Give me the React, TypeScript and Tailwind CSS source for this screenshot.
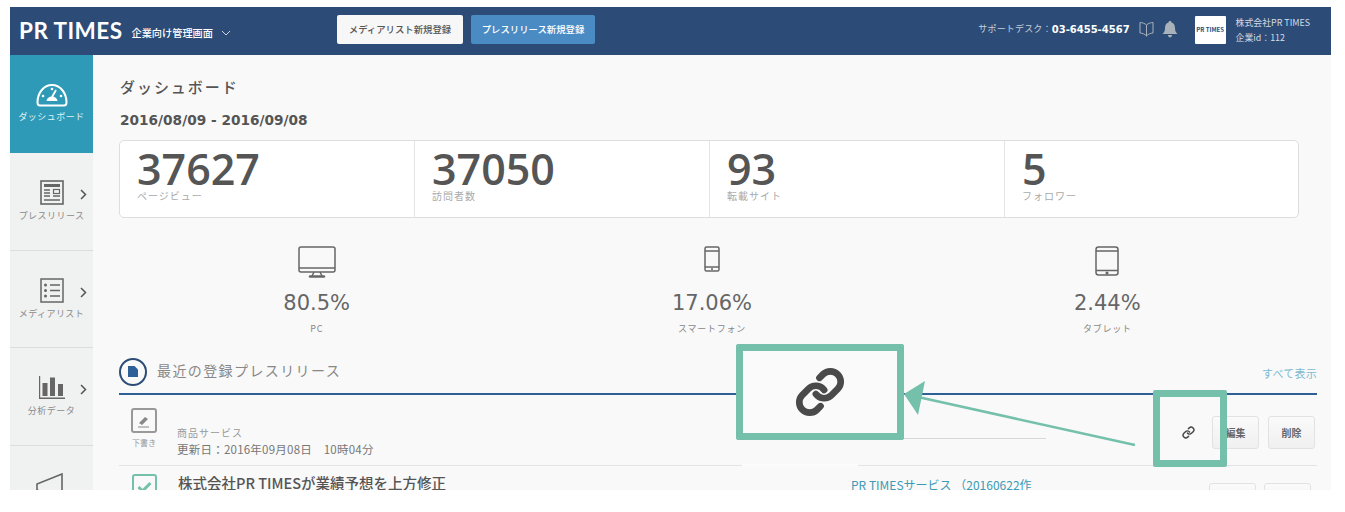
import { Link } from 'lucide-react';
import type { ReactNode } from 'react';

const stats = [
  { value: '37627', label: 'ページビュー' },
  { value: '37050', label: '訪問者数' },
  { value: '93', label: '転載サイト' },
  { value: '5', label: 'フォロワー' },
];

function GaugeIcon() {
  return (
    <svg width="32" height="24" viewBox="0 0 32 24" fill="none" stroke="#fff" strokeWidth="2">
      <path d="M4 22.500h24c1.500 0 2.500-1 2.500-3C30.500 9.500 24 2 16 2S1.500 9.500 1.500 19.500c0 2 1 3 2.500 3z" />
      <path d="M20 7l-4 7" strokeWidth="1.800" />
      <path d="M10.500 18c.5-3 2.500-4.500 5.500-4.500s5 1.500 5.500 4.500z" fill="#fff" stroke="none" />
      <circle cx="16" cy="6" r="1.300" fill="#fff" stroke="none" />
      <circle cx="7" cy="13" r="1.300" fill="#fff" stroke="none" />
      <circle cx="25" cy="13" r="1.300" fill="#fff" stroke="none" />
    </svg>
  );
}

function NewsIcon() {
  return (
    <svg width="24" height="25" viewBox="0 0 24 25" fill="none" stroke="#666">
      <rect x="1" y="1" width="22" height="23" strokeWidth="1.600" />
      <path d="M4 5.500h16" strokeWidth="3" />
      <path d="M4 10h6M4 13h6M4 16h6M13 16h7M4 20h16" strokeWidth="1.400" />
      <rect x="13.500" y="9.500" width="6" height="4" strokeWidth="1.200" />
    </svg>
  );
}

function ListIcon() {
  return (
    <svg width="24" height="25" viewBox="0 0 24 25" fill="none" stroke="#666">
      <rect x="1" y="1" width="22" height="23" strokeWidth="1.500" />
      <path d="M10 7h10M10 12.500h10M10 18h10" strokeWidth="1.500" />
      <circle cx="5.500" cy="7" r="1.500" fill="#666" stroke="none" />
      <circle cx="5.500" cy="12.500" r="1.500" fill="#666" stroke="none" />
      <circle cx="5.500" cy="18" r="1.500" fill="#666" stroke="none" />
    </svg>
  );
}

function BarsIcon() {
  return (
    <svg width="28" height="23" viewBox="0 0 28 23" fill="#666" stroke="none">
      <path d="M1 0h1.200v21.500H27V23H1z" />
      <rect x="4.500" y="7" width="5" height="13" />
      <rect x="12" y="1.500" width="5" height="18.500" />
      <rect x="20" y="8" width="5" height="12" />
    </svg>
  );
}

function MegaphoneIcon() {
  return (
    <svg className="-ml-[4px]" width="28" height="30" viewBox="0 0 28 30" fill="none" stroke="#666" strokeWidth="1.600">
      <path d="M26 1v26L1 17v-6z" />
    </svg>
  );
}

function MonitorIcon() {
  return (
    <svg width="38" height="32" viewBox="0 0 38 32" fill="none" stroke="#666" strokeWidth="1.500">
      <rect x="1" y="1" width="36" height="25" rx="2" />
      <path d="M1 22h36" />
      <path d="M16 26l-2 4M22 26l2 4" />
      <path d="M12 30.500h14" strokeWidth="2.400" strokeLinecap="round" />
    </svg>
  );
}

function PhoneIcon() {
  return (
    <svg width="16" height="26" viewBox="0 0 16 26" fill="none" stroke="#666" strokeWidth="1.500">
      <rect x="1" y="1" width="14" height="24" rx="1.500" />
      <path d="M1 5h14M1 21h14" />
      <path d="M7 23h2" />
    </svg>
  );
}

function TabletIcon() {
  return (
    <svg width="24" height="30" viewBox="0 0 24 30" fill="none" stroke="#666" strokeWidth="1.500">
      <rect x="1" y="1" width="22" height="28" rx="2.500" />
      <path d="M1 5h22M1 24.500h22" />
      <circle cx="12" cy="27" r=".8" fill="#666" />
    </svg>
  );
}

function SideItem({ icon, label, active, height, chevron = true }: { icon: ReactNode; label: string; active?: boolean; height: string; chevron?: boolean }) {
  return (
    <div className={`${height} shrink-0 flex flex-col items-center pt-[27px] border-b ${active ? 'bg-[#2f9ab7] border-[#2f9ab7]' : 'bg-[#f0f1f1] border-[#dcdcdc]'}`}>
      <div className="w-full grid grid-cols-[1fr_auto_1fr] items-center h-[25px]">
        <span />
        {icon}
        {chevron && (
          <span className="justify-self-end mr-[6px] mt-[4px] text-[#555]">
            <svg width="7" height="11" viewBox="0 0 7 11" fill="none" stroke="currentColor" strokeWidth="1.500">
              <path d="M1 1l4.500 4.500L1 10" />
            </svg>
          </span>
        )}
      </div>
      <span className={`${active ? 'mt-[3px] text-[#dff1f5]' : 'mt-[4px] text-[#8a8a8a]'} text-[9px] leading-[14px] tracking-[0.05em]`}>{label}</span>
    </div>
  );
}

function Device({ icon, value, label }: { icon: ReactNode; value: string; label: string }) {
  return (
    <div className="flex flex-col items-center">
      <div className="h-[32px] flex items-start">{icon}</div>
      <div className="mt-[12px] h-[26px] text-[21px] leading-[26px] text-[#666] font-['DejaVu_Sans','Noto_Sans_CJK_JP',sans-serif]">{value}</div>
      <div className="mt-[6px] h-[14px] text-[9px] leading-[14px] tracking-[0.08em] text-[#888]">{label}</div>
    </div>
  );
}

function ActionButton({ label }: { label: string }) {
  return (
    <div className="w-[47px] h-[33px] flex items-center justify-center rounded-[3px] border border-[#e2e2e2] bg-gradient-to-b from-[#fafafa] to-[#f0f0f0] text-[10px] font-bold text-[#666]">
      {label}
    </div>
  );
}

export default function App() {
  return (
    <div className="relative w-[1345px] h-[512px] bg-white overflow-hidden pt-[7px] pl-[10px] font-['Noto_Sans_CJK_JP','Noto_Sans',sans-serif]">
      <div className="w-[1321px] h-[483px] overflow-hidden bg-[#f9f9f9] flex flex-col">
        {/* Header */}
        <header className="h-[48px] shrink-0 bg-[#2c4c77] flex items-center text-white">
          <span className="ml-[9px] text-[22.500px] leading-none font-bold tracking-[0.02em] font-['Lato',sans-serif]">PR TIMES</span>
          <span className="ml-[9px] mt-[3px] text-[10.200px] font-medium">企業向け管理画面</span>
          <svg className="ml-[8px] mt-[4px]" width="10" height="6" viewBox="0 0 10 6" fill="none" stroke="#c8d2e0" strokeWidth="1">
            <path d="M1 1l4 4 4-4" />
          </svg>
          <div className="ml-[106px] mb-[3px] w-[126px] h-[29px] bg-[#f7f7f7] rounded-[2px] flex items-center justify-center text-[9.400px] font-medium text-[#555]">メディアリスト新規登録</div>
          <div className="ml-[8px] mb-[3px] w-[124px] h-[29px] bg-[#4a8bc4] rounded-[2px] flex items-center justify-center text-[9.400px] font-medium text-white">プレスリリース新規登録</div>
          <div className="ml-auto mb-[4px] flex items-center">
            <span className="text-[9px] tracking-[0.02em] text-[#c5cfdc]">サポートデスク：</span>
            <span className="text-[10px] font-bold font-['DejaVu_Sans',sans-serif]">03-6455-4567</span>
          </div>
          <svg className="ml-[9px] mb-[4px]" width="15" height="16" viewBox="0 0 15 16" fill="none" stroke="#a9b1bb" strokeWidth="1">
            <path d="M7.500 4C6 2.500 3 1.500 1 1.500V12c2 0 5 1 6.500 3 1.500-2 4.500-3 6.500-3V1.500C12 1.500 9 2.500 7.500 4zM7.500 4v11" />
          </svg>
          <svg className="ml-[8px] mb-[4px]" width="16" height="17" viewBox="0 0 16 17" fill="#a9b1bb">
            <path d="M8 0c1 0 1.500.6 1.500 1.500C12 2.200 13 4.500 13 7c0 3 .8 4.500 2.500 6H.5C2.200 11.500 3 10 3 7c0-2.500 1-4.800 3.500-5.500C6.500.6 7 0 8 0zM6 14h4c0 1.500-1 2.500-2 2.500S6 15.500 6 14z" />
          </svg>
          <div className="ml-[17px] w-[31px] h-[28px] mb-[3px] bg-white rounded-[1px] flex items-center justify-center text-[6px] font-bold text-[#2c4c77] whitespace-nowrap">PR TIMES</div>
          <div className="ml-[10px] mr-[21px] mb-[3px] text-[8.900px] leading-[15px] text-[#d5dce6]">
            <div>株式会社PR TIMES</div>
            <div>企業id：112</div>
          </div>
        </header>

        <div className="flex flex-1 min-h-0">
          {/* Sidebar */}
          <aside className="w-[83px] shrink-0 flex flex-col">
            <SideItem active chevron={false} height="h-[98px]" icon={<GaugeIcon />} label="ダッシュボード" />
            <SideItem height="h-[98px]" icon={<NewsIcon />} label="プレスリリース" />
            <SideItem height="h-[97px]" icon={<ListIcon />} label="メディアリスト" />
            <SideItem height="h-[98px]" icon={<BarsIcon />} label="分析データ" />
            <SideItem chevron={false} height="h-[98px]" icon={<MegaphoneIcon />} label="" />
          </aside>

          {/* Main */}
          <main className="flex-1 min-w-0 pl-[26px] pr-[14px] pt-[22px]">
            <h1 className="ml-px h-[20px] text-[15px] leading-[20px] font-medium tracking-[0.13em] text-[#555]">ダッシュボード</h1>
            <div className="ml-px mt-[13px] h-[20px] text-[13.700px] leading-[20px] font-bold text-[#555] font-['DejaVu_Sans',sans-serif]">2016/08/09 - 2016/09/08</div>

            <div className="mt-[10px] mr-[18px] h-[78px] bg-white border border-[#dedede] rounded-[5px] grid grid-cols-[295px_295px_295px_1fr]">
              {stats.map((s, i) => (
                <div key={s.label} className={`pl-[17px] ${i < 3 ? 'border-r border-[#e4e4e4]' : ''}`}>
                  <div className="h-[40px] mt-[8px] text-[43px] leading-[40px] font-semibold text-[#555] font-['Open_Sans',sans-serif]">{s.value}</div>
                  <div className="h-[14px] text-[10px] leading-[14px] tracking-[0.1em] text-[#aaa]">{s.label}</div>
                </div>
              ))}
            </div>

            <div className="mt-[28px] grid grid-cols-3 mr-[12px]">
              <Device icon={<MonitorIcon />} value="80.5%" label="PC" />
              <Device icon={<PhoneIcon />} value="17.06%" label="スマートフォン" />
              <Device icon={<TabletIcon />} value="2.44%" label="タブレット" />
            </div>

            <div className="mt-[21px] h-[29px] flex items-center">
              <div className="w-[28px] h-[28px] rounded-full border-2 border-[#2c4c77] flex items-center justify-center">
                <svg width="10" height="11" viewBox="0 0 10 11" fill="#2f5f97">
                  <path d="M0 0h6.500L10 3.500V11H0z" />
                </svg>
              </div>
              <h2 className="ml-[10px] mb-[3px] text-[14px] tracking-[0.1em] text-[#888]">最近の登録プレスリリース</h2>
              <span className="ml-auto mt-[3px] text-[11px] tracking-[0.02em] text-[#7db9cf]">すべて表示</span>
            </div>
            <div className="mt-[7px] h-[2px] bg-[#2f5f97]" />

            {/* Rows */}
            <div className="h-[71px] flex border-b border-[#e4e4e4]">
              <div className="w-[58px] pl-[12px] pt-[13px] flex flex-col">
                <div className="w-[26px] h-[25px] rounded-[3px] border-2 border-[#999] flex items-center justify-center">
                  <svg width="14" height="14" viewBox="0 0 14 14" fill="#888">
                    <path d="M2 9l6-6 3 2-6 6zM1 12.500h11v1H1z" />
                  </svg>
                </div>
                <span className="mt-[4px] ml-[1px] text-[8px] leading-[12px] text-[#999]">下書き</span>
              </div>
              <div className="pt-[29px] text-[10px] leading-[17px] text-[#888]">
                <div className="tracking-[0.1em] text-[#999]">商品サービス</div>
                <div className="text-[11.500px] tracking-[0.02em] text-[#777]">更新日：2016年09月08日　10時04分</div>
              </div>
              <div className="ml-auto mr-[2px] pt-[21px] flex items-start gap-[9px]">
                <div className="mr-[8px] mt-[10px]">
                  <Link size={13} strokeWidth={2.600} color="#444" />
                </div>
                <ActionButton label="編集" />
                <ActionButton label="削除" />
              </div>
            </div>
            <div className="flex">
              <div className="w-[59px] pl-[13px] pt-[8px]">
                <div className="w-[25px] h-[25px] rounded-[3px] border-2 border-[#74c0ab] flex items-center justify-center">
                  <svg width="15" height="12" viewBox="0 0 15 12" fill="none" stroke="#74c0ab" strokeWidth="3">
                    <path d="M1.500 6l4 4 8-8" />
                  </svg>
                </div>
              </div>
              <div className="pt-[7px] text-[14.500px] leading-[20px] font-medium text-[#555] w-[673px] whitespace-nowrap">株式会社PR TIMESが業績予想を上方修正</div>
              <div className="pt-[9px] text-[12px] leading-[20px] text-[#3c9ab5] w-[358px] whitespace-nowrap">PR TIMESサービス （20160622作</div>
              <div className="pt-[17px] flex gap-[8px]">
                <ActionButton label="" />
                <ActionButton label="" />
              </div>
            </div>
          </main>
        </div>
      </div>

      {/* Annotation layer */}
      <div className="absolute left-[742px] top-[464px] w-[116px] h-[3px] bg-[#fbfbfb]" />
      <div className="absolute left-[903px] top-[438px] w-[143px] h-px bg-[#d8d8d8]" />
      <div className="absolute left-[736px] top-[344px] w-[168px] h-[96px] rounded-[2px] border-[7px] border-[#74c0ab] bg-[#fafafa] flex items-center justify-center">
        <Link size={50} strokeWidth={3.200} color="#4a4a4a" />
      </div>
      <div className="absolute left-[1153px] top-[390px] w-[74px] h-[77px] rounded-[2px] border-[7px] border-[#74c0ab]" />
      <svg className="absolute left-[900px] top-[375px]" width="240" height="80" viewBox="0 0 240 80" fill="#74c0ab" stroke="none">
        <path d="M4 19L25 6L18 40z" />
        <path d="M18 22L235 70" stroke="#74c0ab" strokeWidth="2.500" />
      </svg>
    </div>
  );
}
